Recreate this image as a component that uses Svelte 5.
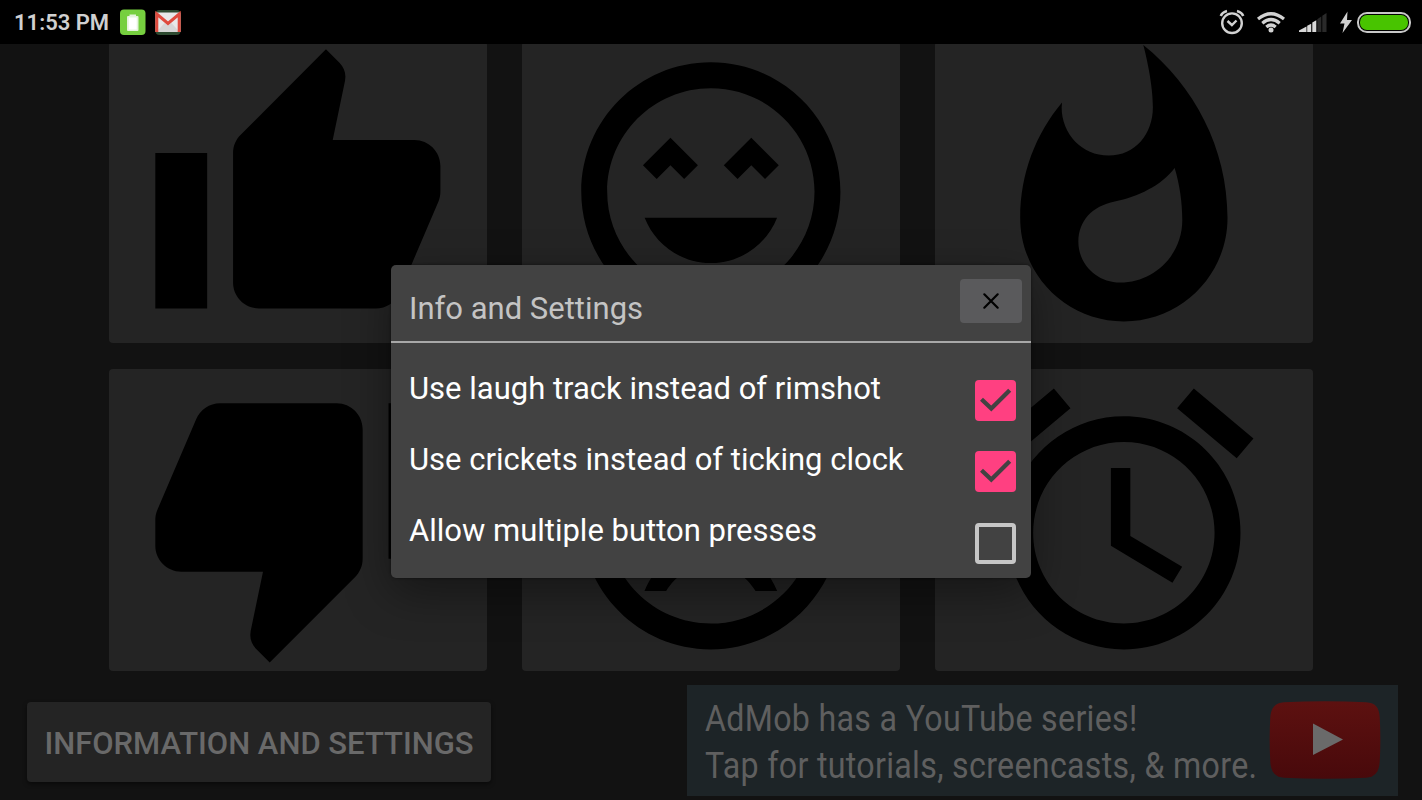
<script>
  const smile = 'M11.99 2C6.47 2 2 6.48 2 12s4.47 10 9.99 10C17.52 22 22 17.52 22 12S17.52 2 11.99 2zM12 20c-4.42 0-8-3.58-8-8s3.58-8 8-8 8 3.58 8 8-3.58 8-8 8z';
  const eyes = 'M13 9.94L14.06 11l1.06-1.06L16.18 11l1.06-1.06-2.12-2.12zM8.88 9.94L9.94 11 11 9.94 8.88 7.82 6.76 9.94 7.82 11z';

  const sounds = [
    {
      name: 'thumbs-up',
      path: 'M1 21h4V9H1v12zM23 10c0-1.1-.9-2-2-2h-6.31l.95-4.57.03-.32c0-.41-.17-.79-.44-1.06L14.17 1 7.59 7.59C7.22 7.95 7 8.45 7 9v10c0 1.1.9 2 2 2h9c.83 0 1.54-.5 1.84-1.22l3.02-7.05c.09-.23.14-.47.14-.73v-2z',
    },
    {
      name: 'rimshot',
      path: `${smile}${eyes}M12 17.5c2.33 0 4.31-1.46 5.11-3.5H6.89c.8 2.04 2.78 3.5 5.11 3.5z`,
    },
    {
      name: 'fire',
      path: 'M13.5.67s.74 2.65.74 4.8c0 2.06-1.35 3.73-3.41 3.73-2.07 0-3.63-1.67-3.63-3.73l.03-.36C5.21 7.51 4 10.62 4 14c0 4.42 3.58 8 8 8s8-3.58 8-8C20 8.61 17.41 3.8 13.5.67zM11.71 19c-1.78 0-3.22-1.4-3.22-3.14 0-1.62 1.05-2.76 2.81-3.12 1.77-.36 3.6-1.21 4.62-2.58.39 1.29.59 2.65.59 4.04 0 2.65-2.15 4.8-4.8 4.8z',
    },
    {
      name: 'thumbs-down',
      path: 'M15 3H6c-.83 0-1.54.5-1.84 1.22l-3.02 7.05c-.09.23-.14.47-.14.73v2c0 1.1.9 2 2 2h6.31l-.95 4.57-.03.32c0 .41.17.79.44 1.06L9.83 23l6.59-6.59c.36-.36.58-.86.58-1.41V5c0-1.1-.9-2-2-2zM19 3v12h4V3h-4z',
    },
    {
      name: 'sad',
      path: `${smile}${eyes}M12 14c-2.33 0-4.32 1.45-5.12 3.5h1.67c.69-1.19 1.97-2 3.45-2s2.75.81 3.45 2h1.67c-.8-2.05-2.79-3.5-5.12-3.5z`,
    },
    {
      name: 'clock',
      path: 'M22 5.72l-4.6-3.86-1.29 1.53 4.6 3.86L22 5.72zM7.88 3.39L6.6 1.86 2 5.71l1.29 1.53 4.59-3.85zM12.5 8H11v6l4.75 2.85.75-1.23-4-2.37V8zM12 4c-4.97 0-9 4.03-9 9s4.02 9 9 9c4.97 0 9-4.03 9-9s-4.03-9-9-9zm0 16c-3.87 0-7-3.13-7-7s3.13-7 7-7 7 3.13 7 7-3.13 7-7 7z',
    },
  ];

  let open = $state(true);
  let settings = $state([
    { label: 'Use laugh track instead of rimshot', checked: true },
    { label: 'Use crickets instead of ticking clock', checked: true },
    { label: 'Allow multiple button presses', checked: false },
  ]);
</script>

<div class="screen">
  <header class="status">
    <span class="time">11:53 PM</span>
    <svg class="app-icon" width="26" height="26" viewBox="0 0 26 26">
      <rect x="0" y="0.5" width="25.5" height="25.500" rx="4" fill="#76cf3f" />
      <rect x="9.5" y="5.5" width="6.5" height="3" fill="#e4f3dc" />
      <rect x="7" y="7" width="11.5" height="15" rx="1" fill="#e4f3dc" />
      <rect x="8.7" y="8.500" width="8" height="12" fill="#fff" />
    </svg>
    <svg class="app-icon mail" width="27" height="26" viewBox="0 0 27 26">
      <rect x="0.5" y="1" width="25" height="25" rx="4" fill="#2d4a30" />
      <rect x="0.5" y="3.500" width="25" height="19.5" fill="#e8e8e8" />
      <path d="M1.500 23l8-9 3.500 2.500 3.500-2.500 8 9z" fill="#d6d6d6" />
      <path d="M1.800 23V5L13 14.500 24.200 5V23" fill="none" stroke="#df4b3e" stroke-width="3" />
    </svg>
    <span class="spacer"></span>
    <svg width="26" height="26" viewBox="0 0 26 26" fill="none" stroke="#d2d2d2">
      <circle cx="13" cy="14.200" r="9.800" stroke-width="2.400" />
      <path d="M8.500 12l4.400 4 4.600-4.500" stroke-width="2.400" />
      <path d="M1.800 7Q3.200 3.200 8 2M24.200 7Q22.800 3.200 18 2" stroke-width="2.600" />
    </svg>
    <svg class="wifi" width="30" height="26" viewBox="0 0 30 26" fill="none" stroke="#d2d2d2" stroke-width="3.200">
      <path d="M2 10Q15-.5 28 10" />
      <path d="M6.300 14.200Q15 6.800 23.700 14.200" />
      <path d="M10.300 18Q15 14 19.700 18" />
      <circle cx="15" cy="21" r="2.500" fill="#d2d2d2" stroke="none" />
    </svg>
    <svg class="signal" width="30" height="24" viewBox="0 0 30 24">
      <path d="M0 22v-1.500L7.500 16.500V22zM8.200 22v-6.200l4-2V22zM13.300 22v-9.500l4-2.200V22z" fill="#d8d8d8" />
      <path d="M18.300 22V9.300l4-2.800V22zM23.300 22V5.700L27.500 3V22z" fill="#2a2a2a" />
    </svg>
    <svg class="bolt" width="14" height="24" viewBox="0 0 14 24">
      <path d="M8.500 1.500L1 13.500h4.500L3.500 23 13 10H8z" fill="#d0d0d0" />
    </svg>
    <span class="battery"><i></i></span>
  </header>

  <main class="board">
    {#each sounds as sound (sound.name)}
      <button class="sound" aria-label={sound.name}>
        <svg viewBox="0.05 0.05 24 24"><path d={sound.path} /></svg>
      </button>
    {/each}
  </main>

  <footer class="bottom">
    <button class="info" onclick={() => (open = true)}><span>INFORMATION AND SETTINGS</span></button>
    <div class="ad">
      <p>
        <span>AdMob has a YouTube series!</span>
        <span>Tap for tutorials, screencasts, &amp; more.</span>
      </p>
      <svg class="youtube" width="112" height="80" viewBox="0 0 112 80">
        <defs>
          <linearGradient id="red" x1="0" y1="0" x2="0" y2="1">
            <stop offset="0" stop-color="#5d1110" />
            <stop offset="1" stop-color="#48090b" />
          </linearGradient>
        </defs>
        <path d="M15 2.200Q56 .2 97 2.200C107 2.800 110 8 110.700 17Q112 40 110.700 62C110 72 106 77 97 77.800Q56 79.500 15 77.800C6 77 2 72 1.300 62Q0 40 1.300 17C2 8 6 2.800 15 2.200z" fill="url(#red)" />
        <path d="M44 23.500l30 16L44 55z" fill="#6a6a6a" />
      </svg>
    </div>
  </footer>

  {#if open}
    <section class="dialog">
      <div class="title">
        <h1>Info and Settings</h1>
        <button class="close" aria-label="Close" onclick={() => (open = false)}>
          <svg width="18" height="18" viewBox="0 0 18 18">
            <path d="M2.300 2.300l13.400 13.400M15.700 2.300l-13.400 13.400" stroke="#000" stroke-width="2.200" stroke-linecap="round" />
          </svg>
        </button>
      </div>
      <div class="options">
        {#each settings as item}
          <label>
            <span>{item.label}</span>
            <input type="checkbox" bind:checked={item.checked} />
            <i class="box" class:checked={item.checked}>
              {#if item.checked}
                <svg width="41" height="41" viewBox="0 0 41 41">
                  <path d="M6.500 19.300l9.800 9.300L34.700 10.300" fill="none" stroke="#424242" stroke-width="4.300" />
                </svg>
              {/if}
            </i>
          </label>
        {/each}
      </div>
    </section>
  {/if}
</div>

<style>
  :global(body) {
    background: #121212;
  }

  button {
    border: 0;
    padding: 0;
    font: inherit;
  }

  .screen {
    position: relative;
    display: flex;
    flex-direction: column;
    box-sizing: border-box;
    width: 1422px;
    height: 800px;
    overflow: hidden;
    background: #121212;
    font-family: Roboto, 'Liberation Sans', sans-serif;
  }

  .status {
    position: relative;
    z-index: 1;
    display: flex;
    flex: none;
    align-items: center;
    box-sizing: border-box;
    height: 44px;
    padding: 0 11px 0 14px;
    background: #000;
    color: #d0d0d0;
  }

  .time {
    width: 106px;
    padding-top: 2px;
    font-size: 22px;
    font-weight: 600;
    line-height: 42px;
    white-space: nowrap;
  }

  .mail {
    margin-left: 9px;
  }

  .spacer {
    flex: 1;
  }

  .wifi {
    margin-left: 11px;
  }

  .signal {
    margin-left: 13px;
  }

  .bolt {
    margin-left: 10px;
  }

  .battery {
    box-sizing: border-box;
    width: 54px;
    height: 21px;
    margin-left: 4px;
    padding: 1px;
    border: 2px solid #c8c8c8;
    border-radius: 10px;
  }

  .battery i {
    display: block;
    height: 100%;
    border-radius: 7px;
    background: #48c400;
  }

  .board {
    display: grid;
    flex: none;
    grid-template-columns: repeat(3, 378px);
    grid-auto-rows: 302px;
    gap: 26px 35px;
    justify-content: center;
    margin-top: -3px;
  }

  .sound {
    display: flex;
    align-items: center;
    justify-content: center;
    border-radius: 4px;
    background: #242424;
  }

  .sound svg {
    flex: none;
    width: 311px;
    height: 311px;
  }

  .bottom {
    display: flex;
    align-items: flex-start;
    justify-content: space-between;
    padding: 13.500px 24px 0 27px;
  }

  .info {
    width: 464px;
    height: 80px;
    margin-top: 17.500px;
    border-radius: 4px;
    background: #242424;
    box-shadow: 0 2px 4px rgba(0, 0, 0, 0.5);
    color: #696969;
    font-size: 31px;
    font-weight: 500;
    white-space: nowrap;
  }

  .info span {
    display: block;
    padding-top: 2px;
  }

  .ad {
    display: flex;
    align-items: flex-start;
    justify-content: space-between;
    box-sizing: border-box;
    width: 711px;
    height: 111px;
    padding: 0 17px 0 18px;
    background: #1d2427;
    color: #5f5f5f;
  }

  .ad p {
    width: 560px;
    margin: 0;
    padding-top: 10.500px;
    font-size: 37px;
    letter-spacing: 0.350px;
    line-height: 47px;
    white-space: nowrap;
  }

  /* narrow the regular face to a condensed width */
  .ad p span {
    display: block;
    transform: scaleX(0.87);
    transform-origin: 0 0;
  }

  .youtube {
    margin-top: 15.500px;
  }

  .dialog {
    position: absolute;
    top: 265px;
    left: 391px;
    z-index: 2;
    width: 640px;
    height: 313px;
    border-radius: 5px;
    background: #424242;
    box-shadow: 0 14px 46px rgba(0, 0, 0, 0.4), 0 0 3px rgba(0, 0, 0, 0.5);
  }

  .title {
    display: flex;
    align-items: flex-start;
    justify-content: space-between;
    box-sizing: border-box;
    height: 78px;
    padding: 13.500px 9px 0 18px;
    border-bottom: 2.500px solid #a8a8a8;
  }

  h1 {
    margin: 0;
    color: #c4c4c4;
    font-size: 31px;
    font-weight: 400;
    line-height: 60px;
  }

  .close {
    display: flex;
    align-items: center;
    justify-content: center;
    width: 62px;
    height: 44.500px;
    border-radius: 4px;
    background: #5a5a5c;
  }

  .options {
    padding: 22px 15px 0 18px;
  }

  label {
    display: flex;
    justify-content: space-between;
    height: 71.200px;
    color: #fff;
    font-size: 31px;
    line-height: 48px;
    white-space: nowrap;
  }

  input {
    position: absolute;
    opacity: 0;
    pointer-events: none;
  }

  .box {
    box-sizing: border-box;
    width: 41px;
    height: 41px;
    margin-top: 15.200px;
    border: 4.500px solid #c6c6c6;
    border-radius: 4px;
  }

  .box.checked {
    border: 0;
    background: #ff4081;
  }

  .box svg {
    display: block;
  }
</style>
